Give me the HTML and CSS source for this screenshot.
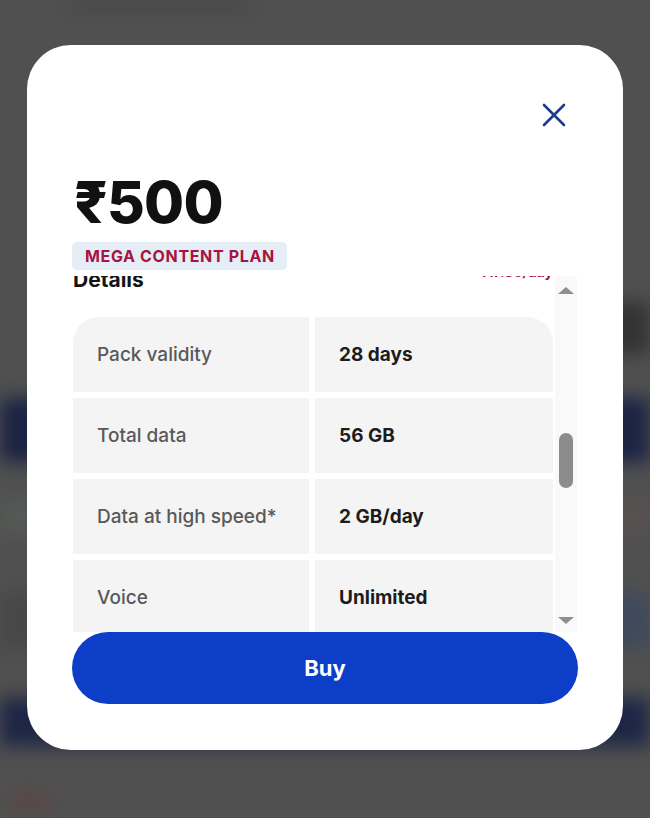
FILE: index.html
```html
<!DOCTYPE html>
<html lang="en">
<head>
<meta charset="utf-8">
<title>Plan details</title>
<link rel="stylesheet" href="styles.css">
</head>
<body>
<div class="bg">
  <div class="bg-row bg-top"><span class="bg-text"></span></div>
  <div class="bg-row bg-gap1"></div>
  <div class="bg-row bg-dark"><span class="bg-fill"></span><span class="bg-black"></span></div>
  <div class="bg-row bg-gap2"></div>
  <div class="bg-row bg-navy"></div>
  <div class="bg-row bg-gap3"></div>
  <div class="bg-row bg-mid"><span class="bg-green"></span><span class="bg-fill"></span><span class="bg-brown"></span></div>
  <div class="bg-row bg-gap4"></div>
  <div class="bg-row bg-low"><span class="bg-dk"></span><span class="bg-fill"></span><span class="bg-blue"></span></div>
  <div class="bg-row bg-gap5"></div>
  <div class="bg-row bg-navy2"></div>
  <div class="bg-row bg-gap6"></div>
  <div class="bg-row bg-bottom"><span class="bg-red"></span></div>
</div>

<div class="overlay">
  <div class="modal">
    <div class="close-row">
      <button class="close" aria-label="Close">
        <svg width="24" height="24" viewBox="0 0 24 24"><path d="M2 2 L22 22 M22 2 L2 22" stroke="#1d3b8b" stroke-width="2.6" stroke-linecap="round" fill="none"/></svg>
      </button>
    </div>
    <div class="price">₹500</div>
    <div class="badge">MEGA CONTENT PLAN</div>

    <div class="scroll">
      <div class="scroll-view">
        <div class="scroll-inner">
          <div class="details-head">
            <span class="details-title">Details</span>
            <span class="details-rate">₹17.86/day</span>
          </div>
          <div class="table">
            <div class="cell label first-l">Pack validity</div>
            <div class="cell value first-r">28 days</div>
            <div class="cell label">Total data</div>
            <div class="cell value">56 GB</div>
            <div class="cell label">Data at high speed*</div>
            <div class="cell value">2 GB/day</div>
            <div class="cell label">Voice</div>
            <div class="cell value">Unlimited</div>
            <div class="cell label">SMS</div>
            <div class="cell value">100/day</div>
          </div>
        </div>
      </div>
      <div class="scrollbar">
        <span class="arrow-up"></span>
        <span class="thumb"></span>
        <span class="track-fill"></span>
        <span class="arrow-down"></span>
      </div>
    </div>

    <button class="buy">Buy</button>
  </div>
</div>
</body>
</html>
```

FILE: styles.css
```css
* { box-sizing: border-box; }

html, body {
  margin: 0;
  padding: 0;
}

body {
  width: 650px;
  height: 818px;
  overflow: hidden;
  background: #505050;
  font-family: Inter, "Noto Sans", "DejaVu Sans", sans-serif;
  position: relative;
}

/* blurred page behind the overlay */
.bg {
  display: flex;
  flex-direction: column;
  filter: blur(9px);
}
.bg-row { display: flex; width: 650px; }
.bg-top { height: 22px; padding-left: 70px; }
.bg-text { width: 180px; height: 12px; background: #474747; border-radius: 4px; }
.bg-gap1 { height: 280px; }
.bg-dark { height: 52px; }
.bg-fill { flex: 1; }
.bg-black { width: 60px; background: #333; }
.bg-gap2 { height: 44px; }
.bg-navy { height: 64px; background: #1c2444; }
.bg-gap3 { height: 36px; }
.bg-mid { height: 36px; }
.bg-green { width: 60px; background: #555955; }
.bg-brown { width: 60px; background: #575150; }
.bg-gap4 { height: 60px; }
.bg-low { height: 54px; }
.bg-dk { width: 40px; background: #474747; }
.bg-blue { width: 50px; background: #3e4a5c; }
.bg-gap5 { height: 50px; }
.bg-navy2 { height: 48px; background: #1d2646; }
.bg-gap6 { height: 42px; }
.bg-bottom { height: 30px; }
.bg-red { width: 90px; height: 26px; background: radial-gradient(circle at 30px 16px, #5e4444, transparent 30px); }

.overlay {
  position: absolute;
  inset: 0;
  display: flex;
  justify-content: center;
  align-items: flex-start;
  padding-top: 45px;
}

.modal {
  width: 596px;
  background: #fff;
  border-radius: 44px;
  padding: 58px 46px 46px 45px;
  display: flex;
  flex-direction: column;
}

.close-row {
  display: flex;
  justify-content: flex-end;
  padding-right: 11px;
  height: 24px;
}
.close {
  border: 0;
  background: none;
  padding: 0;
  width: 24px;
  height: 24px;
  display: block;
  cursor: pointer;
}
.close svg { display: block; }

.price {
  margin-top: 46px;
  font-size: 58px;
  line-height: 58px;
  font-weight: 800;
  color: #111;
  letter-spacing: -0.8px;
  padding-left: 2px;
}

.badge {
  align-self: flex-start;
  margin-top: 11px;
  height: 28px;
  line-height: 28px;
  padding: 0 12px 0 13px;
  background: #e5edf6;
  border-radius: 5px;
  color: #a6143f;
  font-size: 16px;
  font-weight: 700;
  letter-spacing: 0.65px;
}

.scroll {
  margin-top: 6px;
  height: 356px;
  display: flex;
}

.scroll-view {
  flex: 1;
  overflow: hidden;
}
.scroll-inner {
  margin-top: -10px;
  padding-left: 1px;
}

.details-head {
  display: flex;
  justify-content: space-between;
  align-items: flex-start;
  height: 28px;
  padding-right: 2px;
}
.details-title {
  font-size: 21px;
  line-height: 28px;
  font-weight: 700;
  color: #141414;
}
.details-rate {
  margin-top: -2px;
  font-size: 14px;
  line-height: 16px;
  font-weight: 700;
  color: #a6143f;
}

.table {
  margin-top: 23px;
  display: grid;
  grid-template-columns: 236px 238px;
  column-gap: 6px;
  row-gap: 6px;
  grid-auto-rows: 75px;
}
.cell {
  background: #f4f4f4;
  display: flex;
  align-items: center;
  padding-left: 24px;
  font-size: 19px;
}
.label { color: #595959; font-weight: 500; }
.value { color: #1c1c1c; font-weight: 700; }
.first-l { border-top-left-radius: 26px; }
.first-r { border-top-right-radius: 26px; }

.scrollbar {
  width: 22px;
  background: #f9f9f9;
  display: flex;
  flex-direction: column;
  align-items: center;
  padding: 11px 0 8px;
}
.arrow-up {
  width: 0;
  height: 0;
  border-left: 8px solid transparent;
  border-right: 8px solid transparent;
  border-bottom: 7px solid #8f8f8f;
}
.thumb {
  margin-top: 139px;
  width: 14px;
  height: 55px;
  border-radius: 7px;
  background: #8c8c8c;
}
.track-fill { flex: 1; }
.arrow-down {
  width: 0;
  height: 0;
  border-left: 8px solid transparent;
  border-right: 8px solid transparent;
  border-top: 7px solid #8f8f8f;
}

.buy {
  height: 72px;
  margin-right: -1px;
  border: 0;
  border-radius: 36px;
  background: #0d3ec8;
  color: #fff;
  font-family: Inter, "Noto Sans", "DejaVu Sans", sans-serif;
  font-size: 22px;
  font-weight: 700;
  cursor: pointer;
}
```
